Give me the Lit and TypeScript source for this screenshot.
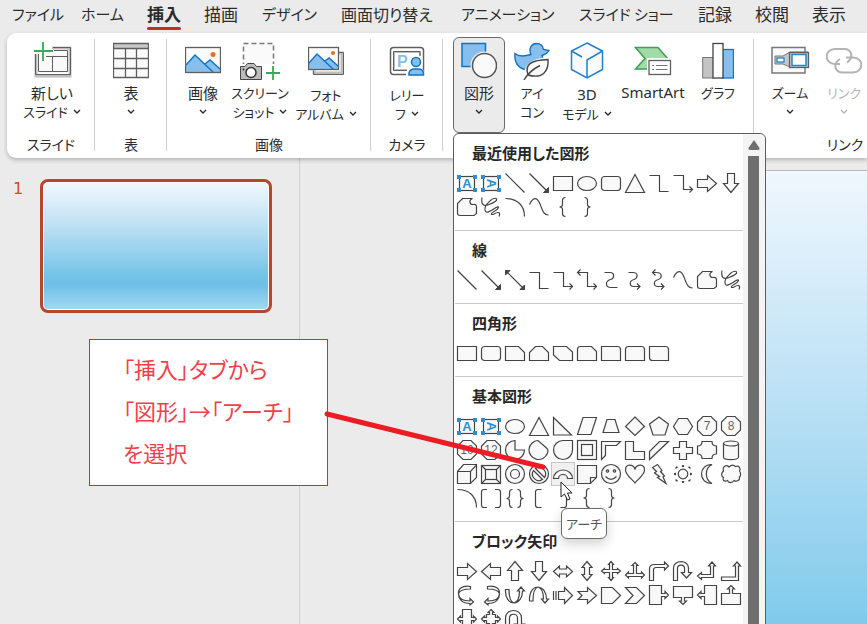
import { LitElement, html, svg, css, nothing, type SVGTemplateResult, type TemplateResult } from "lit";
import { customElement, property } from "lit/decorators.js";
import { classMap } from "lit/directives/class-map.js";

type Art = SVGTemplateResult | SVGTemplateResult[];

const p = (d: string) => svg`<path d=${d} />`;
const open = (d: string) => svg`<path class="open" d=${d} />`;
const head = (d: string) => svg`<path class="solid" d=${d} />`;
const octagon = (label: string) => svg`
  <path d="M8 2.5H16L21.5 8V16L16 21.5H8L2.5 16V8Z" />
  <text class="num" x="12" y="16">${label}</text>`;
const frameDots = svg`
  <rect x="4.5" y="5.5" width="15" height="14" />
  <path class="dot" d="M2 4h4v4H2zM18 4h4v4h-4zM2 17h4v4H2zM18 17h4v4h-4z" />`;

const LEFT_BRACE = "M14.5 2.5Q11.5 2.5 11.5 5.5V9.5Q11.5 12 8.5 12Q11.5 12 11.5 14.5V18.5Q11.5 21.5 14.5 21.5";
const RIGHT_BRACE = "M9.5 2.5Q12.5 2.5 12.5 5.5V9.5Q12.5 12 15.5 12Q12.5 12 12.5 14.5V18.5Q12.5 21.5 9.5 21.5";

const SHAPES: Record<string, Art> = {
  textBox: svg`${frameDots}<text class="letter" x="12" y="17">A</text>`,
  verticalTextBox: svg`${frameDots}<text class="letter" x="12" y="17" transform="rotate(90 12 12.5)">A</text>`,
  line: open("M2.5 2.5L21.5 21.5"),
  arrow: svg`${open("M2.5 2.5L21.5 21.5")}${head("M21.5 16.5V21.5H16.5Z")}`,
  doubleArrow: svg`${open("M2.5 2.5L21.5 21.5")}${head("M21.5 17V21.5H17Z")}${head("M2.5 7V2.5H7Z")}`,
  rect: p("M2.5 5.5H21.5V19.5H2.5Z"),
  ellipse: svg`<ellipse cx="12" cy="12.5" rx="9.5" ry="7" />`,
  roundRect: svg`<rect x="2.5" y="5.5" width="19" height="14" rx="3" />`,
  triangle: p("M12 3.5L21.5 21.5H2.5Z"),
  elbow: open("M2.5 4.5H12.5V20.5H21.5"),
  elbowArrow: open("M2.5 4.5H12.5V18.5H21.5M18.5 15.5L21.5 18.5L18.5 21.5"),
  elbowDouble: open("M2.5 4.5H12.5V18.5H21.5M18.5 15.5L21.5 18.5L18.5 21.5M5.5 1.5L2.5 4.5L5.5 7.5"),
  curved: open("M5.500 4.5H11C16 4.5 15.5 10.5 11.5 11.5C6 13 6 19.5 12 19.5H18.5"),
  curvedArrow: open("M5.5 4.5H10C15.5 4.5 15 10 11 11.5C6 13 6 18.5 11 18.5H17M14 15.5L17 18.5L14 21.5"),
  curvedDouble: open("M5.5 4.5H9C16 4.5 15 10 11.5 11.5C6 13 6 18.5 11 18.5H17M14 15.5L17 18.5L14 21.5M8.5 1.5L5.5 4.5L8.5 7.5"),
  curve: open("M2.5 9.5C6 2 10 1.5 13 9C16 17 17 20 21.5 20"),
  freeform: p("M7.5 3.5H17.5C13.5 5 14.500 9.5 18 9.5C20.5 9 21.5 10 21.5 12V18.5L19 20.5H5Q2.5 20.5 2.5 18V8.5Z"),
  scribble: open("M3 2.5C2 9 4 12 10 9.5C16 7.5 19 5 17 3.5C14 2 5 10 6 15C7 20 13 15 17 12.5C21 10.5 20 14 15 16.5C11 18.5 12 20.5 15 19C19 16.5 22 17 20 21.5"),
  arc: open("M2.5 3.5C14 3.5 21.5 10 21.5 21.5"),
  leftBrace: open(LEFT_BRACE),
  rightBrace: open(RIGHT_BRACE),
  snip1: p("M2.5 5.5H15.5L21.5 11.5V19.5H2.5Z"),
  snip2: p("M2.5 19.5V11.5L8.5 5.5H15.5L21.5 11.5V19.5Z"),
  snipDiag: p("M2.5 5.5H15.5L21.5 11V19.5H8.5L2.5 14Z"),
  snipRound: p("M2.5 19.5V8.5Q2.5 5.5 5.5 5.5H16.5L21.5 10.5V19.5Z"),
  round1: p("M2.5 5.5H18.5Q21.5 5.5 21.5 8.5V19.5H2.5Z"),
  round2: p("M2.5 19.5V8.5Q2.5 5.5 5.5 5.5H18.5Q21.5 5.5 21.5 8.5V19.5Z"),
  roundDiag: p("M2.5 5.5H18.5Q21.5 5.5 21.5 8.5V19.5H5.5Q2.5 19.5 2.5 16.5Z"),
  rightTriangle: p("M2.5 3.5L20.5 21H2.5Z"),
  parallelogram: p("M8 3.5H21.5L16 20.5H2.5Z"),
  trapezoid: p("M8 5.5H16L20 18.5H4Z"),
  diamond: p("M12 3L21.5 12.5L12 21.5L2.5 12.5Z"),
  pentagon: p("M12 3L21.5 10L18 21H6L2.5 10Z"),
  hexagon: p("M7.5 4.5H16.5L21.5 12.5L16.5 20.5H7.5L2.5 12.5Z"),
  seven: octagon("7"),
  eight: octagon("8"),
  ten: octagon("10"),
  twelve: octagon("12"),
  pie: p("M12 2.5A9.5 9.5 0 1 0 21.5 12H12Z"),
  chord: p("M11 2.5A9.5 9.5 0 1 0 20.5 15C21.5 12 21 11.500 19 9.5Z"),
  teardrop: p("M21.5 2.5V12A9.5 9.5 0 1 1 12 2.5Z"),
  frame: svg`<rect x="2.5" y="2.5" width="19" height="19" /><rect x="6.5" y="6.5" width="11" height="11" />`,
  halfFrame: p("M2.5 3.5H21.5L17.5 7.5H6.5V17.5L2.5 21.5Z"),
  corner: p("M2.5 3.5H10.5V13.5H21.5V21.5H2.5Z"),
  stripe: p("M12.5 3.5H21.5L2.5 21.5V13.5Z"),
  cross: p("M8.5 3.5H15.5V9.5H21.5V15.5H15.5V21.5H8.5V15.5H2.5V9.5H8.5Z"),
  plaque: p("M7 3.5H17Q17 8 21.5 8V16Q17 16 17 20.5H7Q7 16 2.5 16V8Q7 8 7 3.5Z"),
  can: svg`${p("M4.5 5V19C4.5 22.5 19.5 22.5 19.5 19V5")}<ellipse cx="12" cy="5.5" rx="7.5" ry="2.5" />`,
  cube: svg`${p("M2.5 9.5L8.5 2.5H21.5V15.5L15.5 21.5H2.5Z")}${open("M2.5 9.5H15.5L21.5 3M15.5 9.5V21.5")}`,
  bevel: svg`<rect x="2.5" y="3.5" width="19" height="18" /><rect x="6.5" y="7.5" width="11" height="10" />${open("M2.5 3.5L6.5 7.5M21.5 3.5L17.5 7.5M2.5 21.5L6.5 17.5M21.5 21.5L17.5 17.5")}`,
  donut: svg`<circle cx="12" cy="12" r="9.5" /><circle cx="12" cy="12" r="4.5" />`,
  noSymbol: svg`<circle cx="12" cy="12" r="9.5" />${p("M8.5 6.5A6.5 6.5 0 0 1 17.5 15.5Z")}${p("M6.5 8.5A6.5 6.5 0 0 0 15.5 17.5Z")}`,
  blockArc: p("M2.5 16.5A9.5 8.5 0 0 1 21.5 16.5H16.5A4.5 4 0 0 0 7.500 16.5Z"),
  foldedCorner: svg`${p("M2.5 3.5H21.5V15.5L15.5 21.5H2.5Z")}${open("M15.5 21.5V15.5H21.5")}`,
  smiley: svg`<circle cx="12" cy="12" r="9.5" /><circle cx="8.5" cy="9" r="1.2" /><circle cx="15.5" cy="9" r="1.2" />${open("M6.5 14.5Q12 20 17.5 14.5")}`,
  heart: p("M12 7C14 2 21.5 1.5 21.5 8C21.5 13 15 17 12 21C9 17 2.5 13 2.5 8C2.5 1.5 10 2 12 7Z"),
  lightning: p("M10.5 2.5L15 8.5L13.5 9.5L17.5 14L16 15L19 21.5L10.5 15.500L12.5 14.5L7.5 11L9.5 9.5L5.5 5.5Z"),
  sun: svg`<circle cx="12" cy="12" r="4.800" />${head("M11 4.500L12 3L13 4.500ZM11 19.500L12 21L13 19.500ZM4.500 11L3 12L4.500 13ZM19.500 11L21 12L19.500 13ZM5 6.500L5 5L6.500 5ZM19 6.500V5H17.500ZM5 17.500V19H6.500ZM19 17.500V19H17.500Z")}`,
  moon: p("M17 2.5C9.500 6 9.500 18 17 21.5C3 22 3 2 17 2.5Z"),
  cloud: p("M4.500 9C3 4 7.500 2.500 10 5C12.500 2.500 15 3 16.500 4.500C20 3 22 6 20.500 9C22 11 22 14 20.500 15C21 19 17 20 15 18.500C13 21.500 9.500 21 8.500 18.500C5 20 3 18 4.500 15.500C2 14 2 11 4.500 9Z"),
  doubleBracket: open("M8 3.5H5Q2.5 3.5 2.5 6V19Q2.5 21.5 5 21.5H8M16 3.5H19Q21.5 3.5 21.5 6V19Q21.5 21.5 19 21.5H16"),
  doubleBrace: open("M9.5 3.5Q6.5 3.5 6.5 6.5V10Q6.5 12.5 3.5 12.5Q6.5 12.5 6.5 15V18.5Q6.5 21.5 9.5 21.5M14.5 3.5Q17.5 3.5 17.5 6.5V10Q17.5 12.5 20.5 12.5Q17.5 12.5 17.5 15V18.5Q17.5 21.5 14.5 21.5"),
  leftBracket: open("M14.5 3.5H11Q8.5 3.5 8.5 6V19Q8.5 21.5 11 21.5H14.5"),
  rightBracket: open("M9.5 3.5H13Q15.5 3.5 15.5 6V19Q15.5 21.5 13 21.5H9.5"),
  right: p("M2.5 8.5H12.5V4.5L21.5 12.5L12.5 20.5V16.5H2.5Z"),
  left: p("M21.5 8.5H11.5V4.5L2.5 12.5L11.5 20.5V16.5H21.5Z"),
  up: p("M8.5 21.5V11.5H4.5L12 2.5L19.5 11.5H15.5V21.5Z"),
  down: p("M8.5 2.5H15.5V12.5H19.5L12 21.5L4.5 12.5H8.5Z"),
  leftRight: p("M2.5 12.5L8.5 7V10H15.5V7L21.5 12.5L15.5 18V15H8.5V18Z"),
  upDown: p("M12 2.5L17 8.5H14.5V15.5H17L12 21.5L7 15.5H9.5V8.5H7Z"),
  quad: p("M12 2.5L14.5 5.5H13.5V10.5H18.5V9.5L21.5 12L18.5 14.5V13.5H13.5V18.5H14.5L12 21.5L9.5 18.5H10.5V13.5H5.5V14.5L2.5 12L5.5 9.5V10.5H10.5V5.5H9.5Z"),
  leftRightUp: p("M12 3.5L15 6.5H13.5V14.5H18.5V13L21.5 16L18.5 19V17.5H5.5V19L2.5 16L5.5 13V14.5H10.5V6.5H9Z"),
  bent: p("M2.5 21.5V9.5Q2.5 5.5 7.5 5.5H17.5V3L21.5 7L17.5 11V8.5H9Q6.5 8.5 6.5 11V21.5Z"),
  uTurn: p("M2.5 21.5V9C2.5 0.5 17.5 0.5 17.5 9V13.5H20.5L15.5 19L10.5 13.5H13.5V9.5C13.5 5 6.5 5 6.5 9.5V21.5Z"),
  leftUp: p("M17 3L20.5 7H18.5V18.5H6.5V20.5L2.5 17L6.5 13.5V15.5H15.5V7H13.5Z"),
  bentUp: p("M18 3L21.5 7H19.5V21.5H2.5V18H16.5V7H14.5Z"),
  curvedRight: p("M15.5 3.5C7 2 3 6 3.5 11C4 16 8 18 15 18V15.500L18.500 19L15 22V20.500C7 20.500 3.500 16 3.500 11C4 8 8 6 15.500 6Z"),
  curvedLeft: p("M8.5 3.5C17 2 21 6 20.5 11C20 16 16 18 9 18V15.500L5.500 19L9 22V20.500C17 20.500 20.500 16 20.500 11C20 8 16 6 8.500 6Z"),
  curvedUp: p("M2.5 6.5C2 15 6 20 11 20C16 19.500 19.500 15 19.500 8H21.500L18 4L14.500 8H16.500C16.500 14 14.500 19 11 20C7.500 19 6 13 6 6.5Z"),
  curvedDown: p("M2.5 18C2 9 6 4 11 4C16 4.500 19.500 9 19.500 16H21.500L18 20L14.500 16H16.500C16.500 10 14.500 5 11 4C7.500 5 6 11 6 18Z"),
  striped: svg`${open("M2.5 8V17M5 8V17")}${p("M7.5 8.5H13.5V4.5L21.5 12.5L13.5 20.5V16.5H7.5Z")}`,
  notched: p("M3 8.5H12.5V4.5L21.5 12.5L12.5 20.5V16.5H3L7 12.5Z"),
  homePlate: p("M2.5 4.5H13.5L21.5 12.5L13.5 20.5H2.5Z"),
  chevron: p("M2.5 4.5H13.5L21.5 12.5L13.5 20.5H2.5L10 12.5Z"),
  rightCallout: p("M2.5 2.5H14.5V10.5H18V8.5L21.5 12L18 15.5V13.5H14.5V21.5H2.5Z"),
  downCallout: p("M2.5 3.5H21.5V14.5H13.5V18H15.5L12 21.5L8.5 18H10.5V14.5H2.5Z"),
  leftCallout: p("M21.5 2.5H9.5V10.5H6V8.5L2.5 12L6 15.5V13.5H9.5V21.5H21.5Z"),
  upCallout: p("M2.5 21.5H21.5V10.5H13.5V6H15.5L12 2.5L8.5 6H10.5V10.5H2.5Z"),
  leftRightCallout: p("M7.5 2.5H16.5V10.5H18.5V9L21.5 12L18.5 15V13.5H16.5V21.5H7.5V13.5H5.5V15L2.5 12L5.5 9V10.5H7.5Z"),
  quadCallout: p("M12 2.5L15 5.5H13.5V7.5H16.5V10.5H18.5V9L21.5 12L18.5 15V13.5H16.5V16.5H13.5V18.5H15L12 21.5L9 18.5H10.5V16.5H7.5V13.5H5.5V15L2.5 12L5.5 9V10.5H7.5V7.5H10.5V5.5H9Z"),
  circular: p("M2.5 21.5V11C2.5 1 18.5 1 18.5 11V17H21.5L16.5 22L11.5 17H14.5V11C14.5 6 6.5 6 6.5 11V21.5Z"),
};

const SECTIONS: { title: string; shapes: string[] }[] = [
  {
    title: "最近使用した図形",
    shapes: "textBox verticalTextBox line arrow rect ellipse roundRect triangle elbow elbowArrow right down freeform scribble arc curve leftBrace rightBrace".split(" "),
  },
  {
    title: "線",
    shapes: "line arrow doubleArrow elbow elbowArrow elbowDouble curved curvedArrow curvedDouble curve freeform scribble".split(" "),
  },
  {
    title: "四角形",
    shapes: "rect roundRect snip1 snip2 snipDiag snipRound round1 round2 roundDiag".split(" "),
  },
  {
    title: "基本図形",
    shapes: [
      "textBox verticalTextBox ellipse triangle rightTriangle parallelogram trapezoid diamond pentagon hexagon seven eight",
      "ten twelve pie chord teardrop frame halfFrame corner stripe cross plaque can",
      "cube bevel donut noSymbol blockArc foldedCorner smiley heart lightning sun moon cloud",
      "arc doubleBracket doubleBrace leftBracket rightBracket leftBrace rightBrace",
    ].join(" ").split(" "),
  },
  {
    title: "ブロック矢印",
    shapes: [
      "right left up down leftRight upDown quad leftRightUp bent uTurn leftUp bentUp",
      "curvedRight curvedLeft curvedUp curvedDown striped notched homePlate chevron rightCallout downCallout leftCallout upCallout",
      "leftRightCallout quadCallout circular",
    ].join(" ").split(" "),
  },
];

@customElement("shape-menu")
export class ShapeMenu extends LitElement {
  static styles = css`
    :host {
      display: flex;
      box-sizing: border-box;
      width: 313px;
      background: #fff;
      border: 1px solid #5c5c5c;
      border-radius: 6px;
      font-family: "Noto Sans CJK JP", sans-serif;
      font-feature-settings: "palt";
      color: #262626;
    }
    .sections { flex: 1; padding-left: 1px; }
    section { padding-bottom: 11px; border-bottom: 1px solid #c9c9c9; }
    h2 {
      margin: 0;
      padding-left: 17px;
      font-size: 15px;
      line-height: 37px;
      font-weight: 700;
    }
    .grid { display: grid; grid-template-columns: repeat(12, 24px); grid-auto-rows: 24px; }
    .cell { position: relative; display: flex; }
    .shape {
      box-sizing: border-box;
      width: 24px;
      height: 24px;
      padding: 0;
      border: 0;
      background: none;
    }
    .shape.hover { background: #f0f0f0; box-shadow: inset 0 0 0 1px #c6c6c6; }
    svg { display: block; overflow: visible; }
    .glyph { fill: #f9f9f9; stroke: #444; stroke-width: 1.2; }
    .open { fill: none; }
    .solid { fill: #444; stroke-width: 1; }
    .dot { fill: #2b8fd0; stroke: none; }
    .letter { font: 700 13px "Liberation Sans", sans-serif; fill: #2b8fd0; stroke: none; text-anchor: middle; }
    .num { font: 12px "Liberation Sans", sans-serif; fill: #666; stroke: none; text-anchor: middle; }
    .pointer { position: absolute; left: 9px; top: 19px; z-index: 2; }
    .tip {
      position: absolute;
      left: 10px;
      top: 46px;
      z-index: 1;
      padding: 0 4px;
      border: 1px solid #6a6a6a;
      border-radius: 6px;
      background: #fff;
      box-shadow: 0 5px 12px rgb(0 0 0 / 18%);
      color: #555;
      font-size: 13px;
      line-height: 29px;
      white-space: nowrap;
    }
    .scroll {
      width: 22px;
      display: flex;
      flex-direction: column;
      align-items: center;
      background: #f5f4f4;
      border-radius: 0 6px 0 0;
    }
    .step { height: 22px; width: 22px; padding: 0 0 0 5px; border: 0; background: none; }
    .thumb { flex: 1; width: 11px; margin-right: 1px; background: #6f6f6f; }
  `;

  render() {
    return html`
      <div class="sections">
        ${SECTIONS.map((s) => html`
          <section>
            <h2>${s.title}</h2>
            <div class="grid">
              ${s.shapes.map((name) => this.cell(name))}
            </div>
          </section>`)}
      </div>
      <div class="scroll">
        <button class="step" aria-label="上へ">
          <svg width="12" height="10"><path fill="#6f6f6f" d="M6 0L11.5 8Q12 10 10 10H2Q0 10 0.5 8Z" /></svg>
        </button>
        <div class="thumb"></div>
      </div>`;
  }

  private cell(name: string) {
    const hover = name === "blockArc";
    return html`
      <div class="cell">
        <button class=${classMap({ shape: true, hover })} aria-label=${name}>
          <svg class="glyph" width="24" height="24" viewBox="0 0 24 24">${SHAPES[name]}</svg>
        </button>
        ${hover ? html`
          <svg class="pointer" width="14" height="20" viewBox="0 0 14 20">
            <path d="M1 1V16L4.5 13L7.5 19L10 18L7.5 12H12Z" fill="#fff" stroke="#222" />
          </svg>
          <div class="tip" role="tooltip">アーチ</div>` : nothing}
      </div>`;
  }
}

const G = "#5f5f5f";
const BLUE = "#86bfee";
const EDGE = "#1373bf";

const ICONS: Record<string, TemplateResult> = {
  newSlide: html`<svg width="40" height="38" viewBox="0 0 40 38">
    <path d="M4 9V34H38V6H20" fill="none" stroke="#bdbdbd" stroke-width="3" />
    <rect x="6" y="9" width="30" height="22" fill="#fafafa" />
    <path d="M3.5 11V32.5H38.5V5.5H21" fill="none" stroke=${G} />
    <path d="M6.500 12V29.5H35.5V8.5H22M10 14.5H35.5M20.5 14.5V29.5" fill="none" stroke=${G} />
    <path d="M0 7H21V12H14V21H9V12H0Z" fill="#fff" />
    <path d="M11 0V19M2 9H21" stroke="#3ba757" stroke-width="1.8" /></svg>`,
  table: html`<svg width="36" height="38" viewBox="0 0 36 38">
    <rect x="1" y="1.5" width="34" height="34" fill="#fafafa" />
    <rect x="1" y="1.5" width="34" height="5" fill="#c9c9c9" />
    <path d="M.5 1.5H35.5V35.5H.5ZM.5 6.5H35.5M.5 16.5H35.5M.5 26.5H35.5M12.5 6.5V35.5M23.5 6.5V35.5" fill="none" stroke=${G} stroke-width="1.3" /></svg>`,
  picture: html`<svg width="36" height="38" viewBox="0 0 36 38">
    <rect x=".5" y="5.5" width="35" height="25" fill="#fafafa" />
    <path d="M1 23L10 13L20 22L25 18L35 27V30H1Z" fill=${BLUE} />
    <path d="M1 23L10 13L28 30M20 22L25 18L35 27" fill="none" stroke=${EDGE} stroke-width="1.4" />
    <rect x=".5" y="5.5" width="35" height="25" fill="none" stroke=${G} stroke-width="1.3" />
    <circle cx="28" cy="12.5" r="2.5" fill="#e2731b" /></svg>`,
  screenshot: html`<svg width="42" height="38" viewBox="0 0 42 38">
    <rect x="4.5" y="1.5" width="30" height="30" fill="#fafafa" stroke="#777" stroke-width="1.5" stroke-dasharray="5 3" />
    <path d="M0 22H23V38H0ZM25 22H42V38H25Z" fill="#fff" />
    <path d="M1.5 24.5H6L8.5 21.5H15L17.5 24.5H22.5V37.5H1.5Z" fill="#bcbcbc" stroke="#444" />
    <circle cx="12" cy="30.5" r="5" fill="#fff" stroke="#333" stroke-width="1.5" />
    <circle cx="4.5" cy="27.5" r="1" fill="#333" />
    <path d="M34 24V38M27 31H41" stroke="#3ba757" stroke-width="1.8" /></svg>`,
  album: html`<svg width="36" height="38" viewBox="0 0 36 38">
    <path d="M6 28V31H34V11H31" fill="none" stroke="#bdbdbd" stroke-width="3" />
    <path d="M5.5 29V32.5H35.5V10.5H31" fill="none" stroke=${G} />
    <rect x=".5" y="5.5" width="30" height="22" fill="#fafafa" />
    <path d="M1 21L9 12L17 19L21 16L30 24V27H1Z" fill=${BLUE} />
    <path d="M1 21L9 12L25 27M17 19L21 16L30 24" fill="none" stroke=${EDGE} stroke-width="1.4" />
    <rect x=".5" y="5.5" width="30" height="22" fill="none" stroke=${G} stroke-width="1.3" />
    <circle cx="25" cy="11" r="2" fill="#e2731b" /></svg>`,
  cameo: html`<svg width="36" height="38" viewBox="0 0 36 38">
    <rect x="1.5" y="5.5" width="33" height="27" rx="3" fill="#fff" stroke=${G} stroke-width="1.5" />
    <path d="M31 14V10H5V28H18" fill="none" stroke="#bdbdbd" stroke-width="2" />
    <path d="M31 14V9.5H4.5V28.5H18" fill="none" stroke=${G} />
    <text x="8" y="25" font-family="Liberation Sans" font-weight="700" font-size="16" fill=${BLUE}>P</text>
    <circle cx="27" cy="20" r="7" fill="#fff" />
    <path d="M17 34V31Q19 25 27 25Q34 25 36 31V34Z" fill="#fff" />
    <circle cx="27" cy="20" r="4.5" fill=${BLUE} stroke=${EDGE} stroke-width="1.5" />
    <path d="M20 33V31Q21 27 25 27H29Q34 27 34.5 31V33Z" fill=${BLUE} stroke=${EDGE} stroke-width="1.5" /></svg>`,
  shapes: html`<svg width="36" height="38" viewBox="0 0 36 38">
    <path d="M1 1.5H24.5V24.5H1Z" fill=${BLUE} stroke=${EDGE} stroke-width="1.5" />
    <circle cx="23.5" cy="23.5" r="14" fill="#ebebeb" />
    <circle cx="23.5" cy="23.5" r="12" fill="#fafafa" stroke="#555" stroke-width="1.5" /></svg>`,
  icons: html`<svg width="36" height="38" viewBox="0 0 36 38">
    <path d="M1 11.500C5 15 12 14 17 12.500C14 6 18 1.5 22.500 1.5C26.500 1.5 29 4 29.5 7.5L35 8.500C33 12 30 13 28 13.5C31 20 27 28 15 28C5 28 0 21 1 11.500Z" fill=${BLUE} stroke=${EDGE} stroke-width="1.4" />
    <path d="M9 38C9 26 14 16 36 15V22C36 34 26 38 18 37Z" fill="#fff" />
    <path d="M14 33C10 22 18 18 34 17.5C35 30 28 37 14 33Z" fill="#fafafa" stroke="#444" stroke-width="1.4" />
    <path d="M10 38C14 31 19 27 26 23.500" fill="none" stroke="#444" stroke-width="1.4" /></svg>`,
  cube: html`<svg width="34" height="38" viewBox="0 0 34 38">
    <path d="M17 1L32.5 9V27.5L17 36L1.5 27.5V9Z" fill="#fafafa" stroke="#2180cc" stroke-width="1.5" />
    <path d="M1.5 9L12 15M32.5 9L17 18V36" fill="none" stroke="#2180cc" stroke-width="1.5" /></svg>`,
  smartArt: html`<svg width="38" height="38" viewBox="0 0 38 38">
    <path d="M1.5 5.5H24L34 17V27H1.5L11 16.5Z" fill="#a3dba8" stroke="#3c9f54" stroke-width="1.5" />
    <path d="M13 16H38V34H13Z" fill="#fff" />
    <rect x="15" y="18.5" width="21.5" height="14" fill="#fff" stroke=${G} stroke-width="1.3" />
    <path d="M18 23.5H20M22 23.5H33.5M18 27.5H20M22 27.5H33.5" stroke="#777" /></svg>`,
  chart: html`<svg width="32" height="38" viewBox="0 0 32 38">
    <rect x=".7" y="15.5" width="11" height="20.5" fill="#c4c4c4" stroke="#777" />
    <rect x="20.5" y="7.5" width="11" height="28.5" fill=${BLUE} stroke=${EDGE} stroke-width="1.3" />
    <rect x="11" y="1.5" width="10" height="34.5" fill="#fff" stroke="#444" stroke-width="1.3" /></svg>`,
  zoom: html`<svg width="40" height="38" viewBox="0 0 40 38">
    <rect x="2" y="5.5" width="33" height="25.5" fill="#fafafa" stroke="#777" stroke-width="1.5" />
    <path d="M5 14H13L20 10H38V25H20L13 22H5Z" fill="#c8c8c8" stroke="#777" />
    <rect x="7" y="16" width="7" height="4" fill="#fff" stroke="#1f87d0" stroke-width="1.3" />
    <rect x="19.5" y="10.5" width="19" height="15" fill="#c8c8c8" stroke=${G} stroke-width="1.3" />
    <rect x="22" y="12.500" width="14" height="11" fill="#fff" stroke="#1f87d0" stroke-width="1.5" /></svg>`,
  link: html`<svg width="36" height="38" viewBox="0 0 36 38">
    <path d="M14 22H9C-2 22 -2 7 9 7H18C26 7 28 16 21 20.500M20 15.5H27C38 15.5 38 30.5 27 30.5H17C8 30.500 7 21 14 17" fill="none" stroke="#b3b3b3" stroke-width="2" /></svg>`,
};

@customElement("ribbon-button")
export class RibbonButton extends LitElement {
  @property() icon = "";
  @property({ type: Array }) lines: string[] = [];
  @property({ type: Boolean }) caret = false;
  @property({ type: Boolean }) below = false;
  @property({ type: Boolean }) low = false;
  @property({ type: Boolean }) pressed = false;
  @property({ type: Boolean }) off = false;

  static styles = css`
    :host { display: block; position: relative; }
    button {
      box-sizing: border-box;
      width: 100%;
      height: 96px;
      padding: 4px 0 0;
      border: 1px solid transparent;
      border-radius: 6px;
      background: none;
      display: flex;
      flex-direction: column;
      align-items: center;
      font: 15px/19px "Noto Sans CJK JP", sans-serif;
      font-feature-settings: "palt";
      color: #2b2b2b;
      white-space: nowrap;
    }
    .pressed { background: #ebebeb; border-color: #6a6a6a; }
    .off { color: #b5b5b5; }
    .icon { height: 41px; display: flex; }
    .low .icon { height: 43px; }
    .line { display: flex; align-items: center; gap: 5px; height: 19px; }
    .kana { font-size: 13px; }
    .latin { font-family: "Noto Sans", sans-serif; }
    .caret { display: block; }
  `;

  render() {
    const caret = html`<svg class="caret" width="8" height="5" viewBox="0 0 8 5"><path d="M1 1L4 4L7 1" fill="none" stroke="currentColor" stroke-width="1.4" /></svg>`;
    const last = this.lines.length - 1;
    return html`
      <button class=${classMap({ pressed: this.pressed, off: this.off, low: this.low })}>
        <span class="icon">${ICONS[this.icon]}</span>
        ${this.lines.map((text, i) => html`
          <span class=${classMap({ line: true, kana: /^[ァ-ー]+$/.test(text), latin: /^[A-Za-z0-9]+$/.test(text) })}>${text}${this.caret && !this.below && i === last ? caret : nothing}</span>`)}
        ${this.below ? html`<span class="line">${caret}</span>` : nothing}
      </button>
      <slot></slot>`;
  }
}

@customElement("app-root")
export class AppRoot extends LitElement {
  static styles = css`
    :host {
      display: flex;
      flex-direction: column;
      position: relative;
      height: 100vh;
      overflow: hidden;
      background: #ebebeb;
      font-family: "Noto Sans CJK JP", sans-serif;
      font-feature-settings: "palt";
      color: #2b2b2b;
    }
    .tabs {
      display: grid;
      grid-template-columns: 69px 66px 57px 58px 79px 120px 118px 119px 57px 57px 55px;
      padding-left: 12px;
      height: 33px;
    }
    .tab {
      justify-self: start;
      height: 31px;
      padding: 0;
      border: 0;
      background: none;
      font: 17px/28px "Noto Sans CJK JP", sans-serif;
      font-feature-settings: "palt";
      color: inherit;
      white-space: nowrap;
      display: flex;
      flex-direction: column;
    }
    .mixed { font-size: 16px; }
    .kana { font-size: 15px; }
    .current { font-weight: 700; }
    .current::after { content: ""; width: 100%; height: 3px; border-radius: 2px; background: #b7361c; margin-top: -1px; }
    .ribbon {
      position: relative;
      z-index: 1;
      display: grid;
      grid-template-columns: 88px 72px 204px 72px 311px 182px;
      margin-left: 7px;
      height: 125px;
      background: #fff;
      border-radius: 9px 0 0 9px;
      box-shadow: 0 2px 4px rgb(0 0 0 / 24%);
    }
    .group { position: relative; display: flex; flex-direction: column; padding-top: 4px; }
    .group:not(:last-child)::after {
      content: "";
      position: absolute;
      right: 0;
      top: 6px;
      bottom: 7px;
      width: 1px;
      background: #cfcfcf;
    }
    .buttons { display: grid; justify-content: start; }
    .g-slide .buttons { grid-template-columns: 70px; padding-left: 10px; }
    .g-table .buttons { grid-template-columns: 60px; padding-left: 6px; }
    .g-image .buttons { grid-template-columns: 50px 64px 68px; padding-left: 11px; }
    .g-camera .buttons { grid-template-columns: 54px; padding-left: 9px; }
    .g-figure .buttons { grid-template-columns: 52px 54px 56px 76px 54px; padding-left: 10px; }
    .g-link .buttons { grid-template-columns: 54px 54px; padding-left: 9px; }
    .name { font-size: 14px; line-height: 22px; text-align: center; }
    shape-menu { position: absolute; top: 100%; left: 0; z-index: 2; }
    .work { flex: 1; display: flex; min-height: 0; }
    .panel {
      box-sizing: border-box;
      width: 300px;
      padding: 21px 0 0 13px;
      border-right: 1px solid #cfcfcf;
      display: flex;
      align-items: flex-start;
      gap: 16px;
    }
    .no { width: 11px; font: 16px/20px "DejaVu Sans", sans-serif; color: #d24726; }
    .slide {
      flex: 0 0 224px;
      height: 126px;
      border: 3px solid #b7472a;
      border-radius: 8px;
      padding: 1px;
      background: linear-gradient(#f1f8fe, #b9dff3 36%, #70c1e8 76%, #70c1e8 82%, #a2d7f0) content-box, #fff;
    }
    .editor { flex: 1; padding: 12px 0 0 200px; display: flex; }
    .canvas { flex: 1; border: 1px solid #b9b9b9; border-width: 1px 0 0 1px; background: linear-gradient(#f0f7fe, #b0dcf3 60%, #80caec); }
    .note {
      position: absolute;
      left: 89px;
      top: 339px;
      z-index: 3;
      box-sizing: border-box;
      width: 239px;
      height: 147px;
      padding: 7px 0 0 33px;
      border: 1px solid #e8252c;
      background: #fff;
      color: #f0414a;
      font-size: 22px;
      line-height: 42px;
    }
    .note p { margin: 0; }
    .leader { position: absolute; left: 100%; top: 68px; overflow: visible; }
  `;

  render() {
    const tabs = ["ファイル", "ホーム", "挿入", "描画", "デザイン", "画面切り替え", "アニメーション", "スライド ショー", "記録", "校閲", "表示"];
    return html`
      <nav class="tabs">
        ${tabs.map((t) => html`<button class=${classMap({ tab: true, current: t === "挿入", mixed: /[ぁ-ん]/.test(t), kana: /^[ァ-ー ]+$/.test(t) })}>${t}</button>`)}
      </nav>
      <div class="ribbon">
        <div class="group g-slide">
          <div class="buttons"><ribbon-button icon="newSlide" .lines=${["新しい", "スライド"]} caret></ribbon-button></div>
          <div class="name">スライド</div>
        </div>
        <div class="group g-table">
          <div class="buttons"><ribbon-button icon="table" .lines=${["表"]} caret below></ribbon-button></div>
          <div class="name">表</div>
        </div>
        <div class="group g-image">
          <div class="buttons">
            <ribbon-button icon="picture" .lines=${["画像"]} caret below></ribbon-button>
            <ribbon-button icon="screenshot" .lines=${["スクリーン", "ショット"]} caret></ribbon-button>
            <ribbon-button icon="album" .lines=${["フォト", "アルバム"]} caret low></ribbon-button>
          </div>
          <div class="name">画像</div>
        </div>
        <div class="group g-camera">
          <div class="buttons"><ribbon-button icon="cameo" .lines=${["レリー", "フ"]} caret low></ribbon-button></div>
          <div class="name">カメラ</div>
        </div>
        <div class="group g-figure">
          <div class="buttons">
            <ribbon-button icon="shapes" .lines=${["図形"]} caret below pressed><shape-menu></shape-menu></ribbon-button>
            <ribbon-button icon="icons" .lines=${["アイ", "コン"]}></ribbon-button>
            <ribbon-button icon="cube" .lines=${["3D", "モデル"]} caret low></ribbon-button>
            <ribbon-button icon="smartArt" .lines=${["SmartArt"]}></ribbon-button>
            <ribbon-button icon="chart" .lines=${["グラフ"]}></ribbon-button>
          </div>
        </div>
        <div class="group g-link">
          <div class="buttons">
            <ribbon-button icon="zoom" .lines=${["ズーム"]} caret below></ribbon-button>
            <ribbon-button icon="link" .lines=${["リンク"]} caret below off></ribbon-button>
          </div>
          <div class="name">リンク</div>
        </div>
      </div>
      <div class="work">
        <aside class="panel"><span class="no">1</span><div class="slide"></div></aside>
        <main class="editor"><div class="canvas"></div></main>
      </div>
      <div class="note">
        <p>「挿入」タブから</p>
        <p>「図形」→「アーチ」</p>
        <p>を選択</p>
        <svg class="leader" width="220" height="64" viewBox="0 0 220 64">
          <path d="M0 6L216 59" stroke="#ed1c24" stroke-width="5" stroke-linecap="round" />
        </svg>
      </div>`;
  }
}
